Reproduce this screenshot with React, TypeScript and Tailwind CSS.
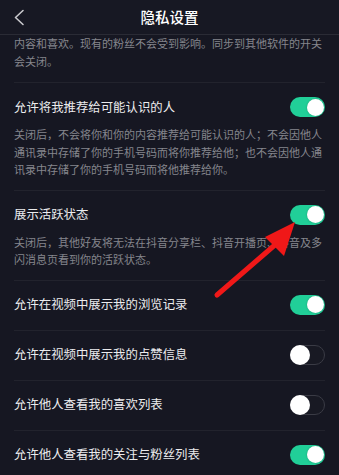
import { ReactNode } from 'react'

interface SettingRow {
    title: string
    desc?: string[]
    on: boolean
}

const rows: SettingRow[] = [
    {
        title: '允许将我推荐给可能认识的人',
        desc: [
            '关闭后，不会将你和你的内容推荐给可能认识的人；不会因他人',
            '通讯录中存储了你的手机号码而将你推荐给他；也不会因他人通',
            '讯录中存储了你的手机号码而将他推荐给你。',
        ],
        on: true,
    },
    {
        title: '展示活跃状态',
        desc: [
            '关闭后，其他好友将无法在抖音分享栏、抖音开播页、抖音及多',
            '闪消息页看到你的活跃状态。',
        ],
        on: true,
    },
    { title: '允许在视频中展示我的浏览记录', on: true },
    { title: '允许在视频中展示我的点赞信息', on: false },
    { title: '允许他人查看我的喜欢列表', on: false },
    { title: '允许他人查看我的关注与粉丝列表', on: true },
]

function Toggle({ on }: { on: boolean }) {
    if (on) {
        return (
            <div className="relative h-[20px] w-[35px] shrink-0 rounded-full bg-[#21cf98]">
                <div className="absolute right-[1.5px] top-[1.5px] h-[17px] w-[17px] rounded-full bg-white shadow-[0_0_2px_rgba(0,0,0,0.25)]" />
            </div>
        )
    }
    return (
        <div className="relative h-[20px] w-[35px] shrink-0 rounded-full border border-[#3a3b45] bg-[#181923]">
            <div className="absolute -left-[1px] -top-[1px] h-[20px] w-[20px] rounded-full bg-white" />
        </div>
    )
}

function Desc({ lines }: { lines: string[] }): ReactNode {
    return (
        <div className="mt-[9px] text-[11px] leading-[17.5px] text-[#85868d]">
            {lines.map((line, i) => (
                <div key={i} className="whitespace-nowrap">{line}</div>
            ))}
        </div>
    )
}

export default function App() {
    return (
        <div
            className="relative h-[475px] w-[339px] overflow-hidden bg-[#161722]"
            style={{ fontFamily: '"Noto Sans CJK SC", "Noto Sans", sans-serif' }}
        >
            {/* header */}
            <div className="relative flex h-[35px] items-center justify-center border-b border-[#2a2b35] bg-[#171823]">
                <svg className="absolute left-[13px] top-[9px]" width="12" height="17" viewBox="0 0 12 17">
                    <path d="M10 1.5 L2.5 8.5 L10 15.5" fill="none" stroke="#c9c9cd" strokeWidth="1.6" strokeLinecap="round" strokeLinejoin="round" />
                </svg>
                <span className="text-[14.5px] font-medium text-white">隐私设置</span>
            </div>

            <div className="mx-[14px]">
                {/* tail of the previous section */}
                <div className="border-b border-[#22232d] pb-[12px] text-[11px] leading-[17.5px] text-[#85868d]">
                    <div className="whitespace-nowrap">内容和喜欢。现有的粉丝不会受到影响。同步到其他软件的开关</div>
                    <div>会关闭。</div>
                </div>

                {rows.map((row) => (
                    <div
                        key={row.title}
                        className={row.desc ? 'border-b border-[#22232d] pb-[11px] pt-[14px]' : 'border-b border-[#22232d] pb-[15px] pt-[14px]'}
                    >
                        <div className="flex h-[20px] items-center justify-between">
                            <span className="text-[12.4px] text-[#ececee]">{row.title}</span>
                            <Toggle on={row.on} />
                        </div>
                        {row.desc && <Desc lines={row.desc} />}
                    </div>
                ))}
            </div>

            {/* red arrow pointing at the toggle */}
            <svg className="pointer-events-none absolute left-0 top-0" width="339" height="475" viewBox="0 0 339 475">
                <line x1="217" y1="295" x2="276" y2="244" stroke="#f01818" strokeWidth="5" strokeLinecap="round" />
                <polygon points="295,222 265,237 284,256" fill="#f01818" />
            </svg>
        </div>
    )
}
